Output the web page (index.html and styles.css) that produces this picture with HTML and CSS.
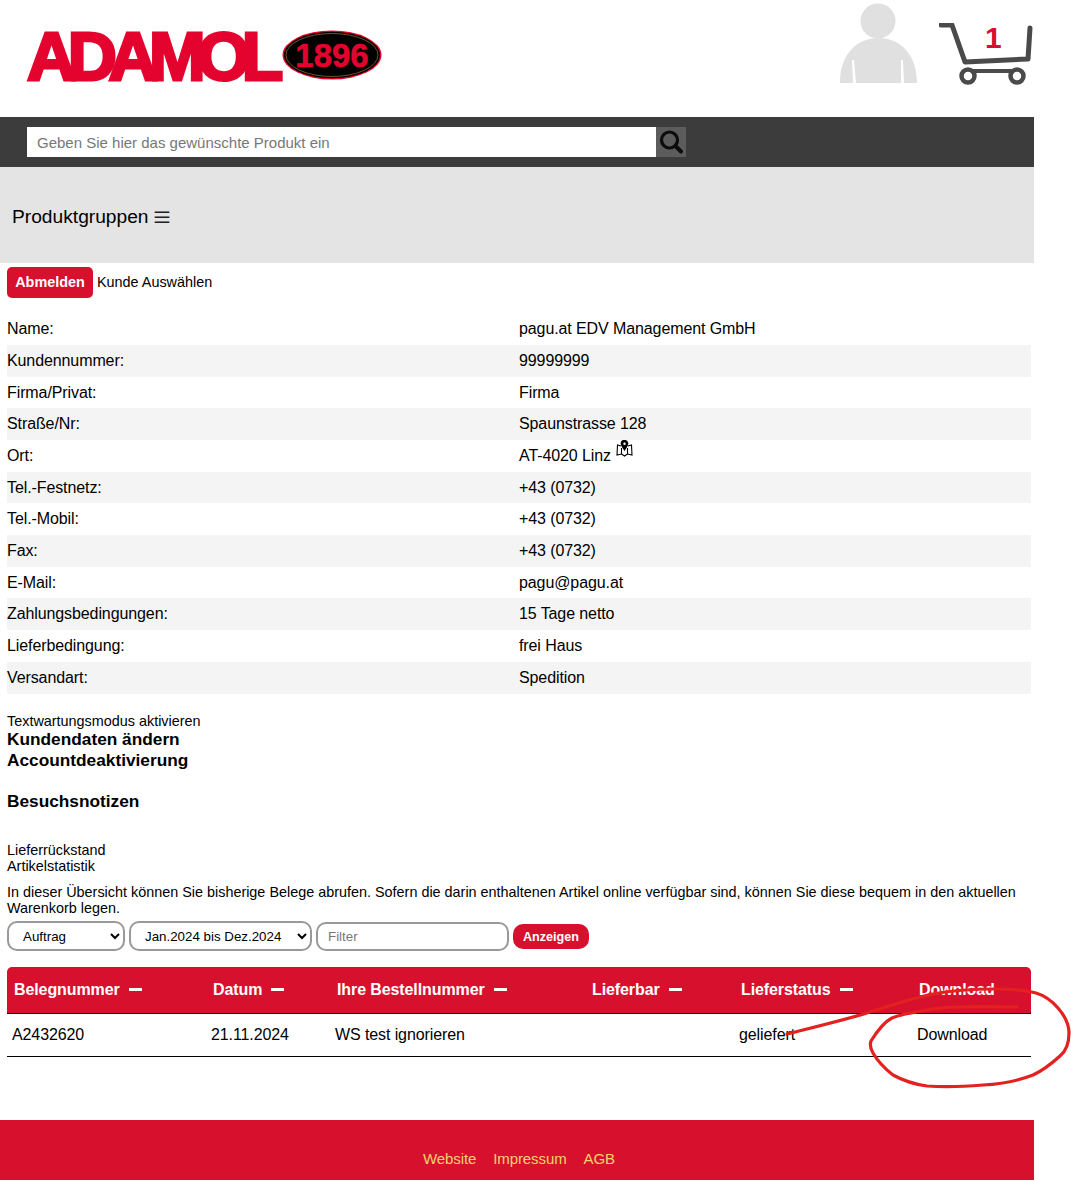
FILE: index.html
```html
<!DOCTYPE html>
<html lang="de">
<head>
  <meta charset="UTF-8">
  <title>Adamol - Mein Konto</title>
  <link rel="stylesheet" href="styles.css">
</head>
<body>
<div class="page">

  <header class="top">
    <a class="logo" href="#">
      <span class="logo-word">ADAMOL</span>
      <svg class="logo-oval" width="100" height="50" viewBox="0 0 100 50">
        <ellipse cx="50" cy="25" rx="49.5" ry="24.5" fill="#e4032e"/>
        <ellipse cx="50" cy="25" rx="48" ry="23.2" fill="#000"/>
        <ellipse cx="50" cy="25" rx="46" ry="21.5" fill="none" stroke="#8a6a2a" stroke-width="0.8"/>
        <text x="50" y="37" text-anchor="middle" class="logo-year">1896</text>
      </svg>
    </a>
    <div class="top-icons">
      <svg class="icon-user" width="79" height="84" viewBox="0 0 79 84">
        <circle cx="39" cy="21" r="17.5" fill="#e0e0e0"/>
        <path d="M1 83 C1 54 18 38 39.5 38 C61 38 78 54 78 83 L65 83 L64 60 L62 60 L62 83 L17 83 L15 60 L13 60 L14 83 Z" fill="#e0e0e0"/>
      </svg>
      <div class="cart">
        <svg width="95" height="66" viewBox="0 0 95 66" fill="none" stroke="#4a4a4a">
          <path d="M2 2 H13 L26 39 L89 36 L91 5" stroke-width="5" stroke-linecap="round" stroke-linejoin="round"/>
          <path d="M29 48 H78" stroke-width="4"/>
          <circle cx="29" cy="53" r="6.5" stroke-width="4.5" fill="#fff"/>
          <circle cx="78" cy="53" r="6.5" stroke-width="4.5" fill="#fff"/>
        </svg>
        <span class="cart-count">1</span>
      </div>
    </div>
  </header>

  <div class="search-bar">
    <input class="search-input" type="text" placeholder="Geben Sie hier das gewünschte Produkt ein">
    <button class="search-btn" aria-label="Suchen">
      <svg width="26" height="26" viewBox="0 0 26 26" fill="none" stroke="#0c0c0c">
        <circle cx="11.5" cy="11" r="8" stroke-width="3.2"/>
        <path d="M17.5 17 L23 22.5" stroke-width="4" stroke-linecap="round"/>
      </svg>
    </button>
  </div>

  <nav class="groups">Produktgruppen <span class="burger">☰</span></nav>

  <main class="content">
    <div class="account-actions">
      <button class="btn-red btn-logout">Abmelden</button>
      <a class="small-link" href="#">Kunde Auswählen</a>
    </div>

    <table class="customer">
      <tr><td>Name:</td><td>pagu.at EDV Management GmbH</td></tr>
      <tr><td>Kundennummer:</td><td>99999999</td></tr>
      <tr><td>Firma/Privat:</td><td>Firma</td></tr>
      <tr><td>Straße/Nr:</td><td>Spaunstrasse 128</td></tr>
      <tr><td>Ort:</td><td>AT-4020 Linz
        <svg class="map-icon" width="17" height="17" viewBox="0 0 17 17" fill="none" stroke="#000" stroke-width="1.1">
          <path d="M5 6 L1.5 5 L1 15 L5.5 14 L8.5 16 L11.5 14 L16 15 L15.5 5 L12 6"/>
          <path d="M5.5 8 V14 M11.5 8 V14"/>
          <path d="M8.5 0.5 C6.5 0.5 5.2 2 5.2 3.7 C5.2 5.7 7.5 8 8.5 10 C9.5 8 11.8 5.7 11.8 3.7 C11.8 2 10.5 0.5 8.5 0.5 Z" fill="#000"/>
          <circle cx="8.5" cy="3.7" r="1.2" fill="#fff" stroke="none"/>
        </svg></td></tr>
      <tr><td>Tel.-Festnetz:</td><td>+43 (0732)</td></tr>
      <tr><td>Tel.-Mobil:</td><td>+43 (0732)</td></tr>
      <tr><td>Fax:</td><td>+43 (0732)</td></tr>
      <tr><td>E-Mail:</td><td>pagu@pagu.at</td></tr>
      <tr><td>Zahlungsbedingungen:</td><td>15 Tage netto</td></tr>
      <tr><td>Lieferbedingung:</td><td>frei Haus</td></tr>
      <tr><td>Versandart:</td><td>Spedition</td></tr>
    </table>

    <div class="links">
      <a class="small-link" href="#">Textwartungsmodus aktivieren</a>
      <a class="big-link" href="#">Kundendaten ändern</a>
      <a class="big-link" href="#">Accountdeaktivierung</a>
      <a class="big-link notes" href="#">Besuchsnotizen</a>
      <a class="small-link backlog" href="#">Lieferrückstand</a>
      <a class="small-link" href="#">Artikelstatistik</a>
    </div>

    <p class="intro">In dieser Übersicht können Sie bisherige Belege abrufen. Sofern die darin enthaltenen Artikel online verfügbar sind, können Sie diese bequem in den aktuellen Warenkorb legen.</p>

    <form class="filters">
      <select class="field sel-type"><option>Auftrag</option></select>
      <select class="field sel-range"><option>Jan.2024 bis Dez.2024</option></select>
      <input class="field filter-input" type="text" placeholder="Filter">
      <button type="button" class="btn-red btn-show">Anzeigen</button>
    </form>

    <table class="docs">
      <colgroup>
        <col class="c1"><col class="c2"><col class="c3"><col class="c4"><col class="c5"><col class="c6">
      </colgroup>
      <thead>
        <tr>
          <th>Belegnummer<span class="sort"></span></th>
          <th>Datum<span class="sort"></span></th>
          <th>Ihre Bestellnummer<span class="sort"></span></th>
          <th>Lieferbar<span class="sort"></span></th>
          <th>Lieferstatus<span class="sort"></span></th>
          <th>Download</th>
        </tr>
      </thead>
      <tbody>
        <tr>
          <td>A2432620</td>
          <td>21.11.2024</td>
          <td>WS test ignorieren</td>
          <td></td>
          <td>geliefert</td>
          <td>Download</td>
        </tr>
      </tbody>
    </table>
  </main>

  <footer class="footer">
    <a href="#">Website</a>
    <a href="#">Impressum</a>
    <a href="#">AGB</a>
  </footer>

  <!-- red pen marking on top of the screenshot -->
  <svg class="scribble" width="1071" height="1180" viewBox="0 0 1071 1180" fill="none">
    <path d="M787 1034 C815 1027 840 1021 867 1013 C890 1006 912 998 933 994 C955 990 975 989 993 989 C1010 989 1025 990 1036 993 C1046 996 1052 1001 1058 1008 C1065 1016 1069 1024 1069 1033 C1069 1043 1066 1051 1060 1056 C1050 1065 1042 1071 1033 1075 C1015 1082 1000 1084 983 1085 C960 1087 940 1087 927 1086 C912 1084 902 1080 893 1075 C884 1068 877 1060 873 1053 C870 1048 870 1044 871 1041 C876 1033 884 1022 892 1018 C902 1014 910 1013 917 1012 C930 1009 945 1007 960 1007 C980 1006 1000 1007 1017 1007" stroke="#e3211f" stroke-width="3.2" stroke-linecap="round"/>
  </svg>
</div>
</body>
</html>
```

FILE: styles.css
```css
* {
  box-sizing: border-box;
}
html, body {
  margin: 0;
  padding: 0;
}
body {
  font-family: "Liberation Sans", Arial, sans-serif;
  font-size: 16px;
  letter-spacing: -0.1px;
  color: #000;
  background: #fff;
}
a {
  color: inherit;
  text-decoration: none;
}
.page {
  position: relative;
  width: 1034px;
}

/* header */
.top {
  height: 117px;
  display: flex;
  justify-content: space-between;
  padding: 0 0 0 27px;
}
.logo {
  display: flex;
  align-items: flex-start;
  padding-top: 30px;
}
.logo-word {
  display: block;
  width: 255px;
  margin-top: -8px;
  font-size: 68px;
  line-height: 68px;
  font-weight: bold;
  letter-spacing: -8.4px;
  color: #e4032e;
  -webkit-text-stroke: 3px #e4032e;
  white-space: nowrap;
}
.logo-oval {
  display: block;
}
.logo-year {
  font-family: "Liberation Sans", Arial, sans-serif;
  font-weight: bold;
  font-size: 33px;
  letter-spacing: 0;
  fill: #e4032e;
  stroke: #e4032e;
  stroke-width: 0.5;
}
.top-icons {
  display: flex;
  align-items: flex-start;
  gap: 21px;
}
.cart {
  position: relative;
  margin-top: 23px;
  height: 66px;
}
.cart-count {
  position: absolute;
  left: 46px;
  top: 0;
  font-size: 30px;
  line-height: 30px;
  font-weight: bold;
  color: #d7102e;
}

/* search */
.search-bar {
  height: 50px;
  background: #3c3c3c;
  padding: 10px 0 10px 27px;
  display: flex;
}
.search-input {
  width: 629px;
  height: 30px;
  border: none;
  padding: 0 10px;
  font-family: inherit;
  font-size: 15px;
  background: #fff;
}
.search-input::placeholder {
  color: #777;
  opacity: 1;
}
.search-btn {
  width: 30px;
  height: 30px;
  padding: 2px;
  border: none;
  background: #5c5c5c;
}
.search-btn svg {
  display: block;
}

.groups {
  height: 96px;
  background: #e4e4e4;
  padding-left: 12px;
  font-size: 19.2px;
  letter-spacing: 0;
  line-height: 100px;
}
.burger {
  font-size: 16px;
  display: inline-block;
  transform: scaleX(1.25);
  margin-left: 1px;
  color: #222;
}

/* customer data */
.content {
  padding: 4px 3px 0 7px;
}
.account-actions {
  display: flex;
  align-items: flex-start;
  gap: 4px;
  height: 31px;
}
.account-actions .small-link {
  margin-top: 7px;
}
.btn-red {
  background: #d7102e;
  color: #fff;
  border: none;
  font-family: inherit;
  font-weight: bold;
}
.btn-logout {
  width: 86px;
  height: 31px;
  padding: 0 0 2px;
  border-radius: 5px;
  font-size: 14.4px;
}
.small-link {
  display: block;
  font-size: 14.4px;
  letter-spacing: 0;
  line-height: 16px;
}
.customer {
  width: 1024px;
  margin-top: 15.3px;
  border-collapse: collapse;
  table-layout: fixed;
}
.customer td {
  height: 31.7px;
  padding: 0;
  vertical-align: middle;
}
.customer tr:nth-child(even) {
  background: #f4f4f4;
}
.map-icon {
  vertical-align: 4px;
  margin: -17px 0 0 1px;
}
.links {
  margin-top: 19.7px;
}
.big-link {
  display: block;
  font-size: 17.28px;
  letter-spacing: 0;
  font-weight: bold;
  line-height: 21px;
}
.notes {
  margin-top: 20px;
}
.backlog {
  margin-top: 30px;
}
.intro {
  margin: 10px 0 0;
  font-size: 14.4px;
  letter-spacing: 0;
  line-height: 16px;
}
.filters {
  display: flex;
  align-items: center;
  gap: 4px;
  margin-top: 5px;
}
.field {
  height: 30px;
  border: 2px solid #999;
  border-radius: 10px;
  background: #fff;
  font-family: inherit;
  font-size: 13.33px;
}
.sel-type {
  width: 118px;
  padding-left: 10px;
}
.sel-range {
  width: 183px;
  padding-left: 10px;
}
.filter-input {
  width: 193px;
  height: 29px;
  padding: 0 10px;
}
.filter-input::placeholder {
  color: #777;
  opacity: 1;
}
.btn-show {
  width: 76px;
  height: 25px;
  padding: 1px 0 0;
  border-radius: 10px;
  font-size: 12.6px;
}

/* documents */
.docs {
  width: 1024px;
  margin-top: 16px;
  border-collapse: separate;
  border-spacing: 0;
  table-layout: fixed;
}
.c1 { width: 199px; }
.c2 { width: 124px; }
.c3 { width: 255px; }
.c4 { width: 149px; }
.c5 { width: 178px; }
.c6 { width: 119px; }
.docs th {
  height: 47px;
  padding: 0 7px;
  background: #d7102e;
  color: #fff;
  font-size: 16px;
  font-weight: bold;
  text-align: left;
  white-space: nowrap;
  border-bottom: 1px solid #000;
}
.docs th:first-child {
  border-top-left-radius: 5px;
}
.docs th:last-child {
  border-top-right-radius: 5px;
}
.sort {
  display: inline-block;
  width: 13px;
  height: 3px;
  margin-left: 9px;
  background: #fff;
  vertical-align: 4px;
}
.docs td {
  height: 43px;
  padding: 0 5px;
  border-bottom: 1px solid #000;
}

.footer {
  height: 60px;
  margin-top: 63px;
  background: #d7102e;
  display: flex;
  justify-content: center;
  align-items: flex-start;
  gap: 17px;
  padding: 30px 0 0 4px;
  font-size: 15px;
  color: #f3d36b;
}
.scribble {
  position: absolute;
  left: 0;
  top: 0;
  pointer-events: none;
}
```
